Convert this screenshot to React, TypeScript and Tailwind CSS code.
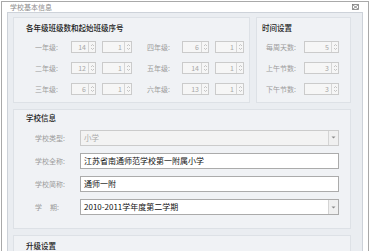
import React from 'react';

const font = { fontFamily: '"Noto Sans CJK SC", "Noto Sans", sans-serif' };

const Spinner: React.FC<{ value: number; w: string }> = ({ value, w }) => (
  <div className={`flex h-[12px] ${w} border border-[#cbcbcb] bg-[#f6f6f6]`}>
    <div className="flex-1 pr-[2px] text-right text-[7px] leading-[10px] text-[#a8a8a8]">{value}</div>
    <div className="flex w-[7px] flex-col items-center justify-center border-l border-[#d6d6d6]">
      <svg width="5" height="8" viewBox="0 0 5 8">
        <path d="M1 3 L2.5 1.5 L4 3" fill="none" stroke="#b8b8b8" strokeWidth="0.8" />
        <path d="M1 5 L2.5 6.5 L4 5" fill="none" stroke="#b8b8b8" strokeWidth="0.8" />
      </svg>
    </div>
  </div>
);

const DropBtn: React.FC = () => (
  <div className="flex w-[10px] items-center justify-center border-l border-[#d4d4d4] bg-[#f0f0f0]">
    <svg width="5" height="3" viewBox="0 0 5 3">
      <path d="M0.5 0.5 L4.5 0.5 L2.5 2.5 Z" fill="#8a8a8a" />
    </svg>
  </div>
);

const grades = [
  ['一年级:', 14, 1, '四年级:', 6, 1],
  ['二年级:', 12, 1, '五年级:', 14, 1],
  ['三年级:', 6, 1, '六年级:', 13, 1],
] as const;

const times = [
  ['每周天数:', 5],
  ['上午节数:', 3],
  ['下午节数:', 3],
] as const;

const App: React.FC = () => {
  return (
    <div className="h-[251px] w-[373px] overflow-hidden bg-white" style={font}>
      <div className="ml-px mt-px flex h-[250px] w-[368px] flex-col border-l border-r border-t border-[#a9a9a9] bg-white">
        {/* title bar */}
        <div className="flex h-[15px] items-center justify-between pl-[8px] pr-[9px]">
          <span className="text-[7px] leading-[10px] text-[#8c8c8c]">学校基本信息</span>
          <svg width="7" height="6" viewBox="0 0 7 6">
            <rect x="0.5" y="0.5" width="6" height="5" fill="none" stroke="#7a7a7a" strokeWidth="0.8" />
            <path d="M1 1 L6 5 M6 1 L1 5" stroke="#7a7a7a" strokeWidth="0.8" />
          </svg>
        </div>

        {/* content panel */}
        <div className="ml-[5px] w-[356px] flex-1 border-l border-r border-t border-[#cdd2d9] bg-[#eaedf1] pl-[5px] pt-[4px]">
          <div className="flex gap-[6px]">
            {/* grades */}
            <div className="h-[86px] w-[237px] border border-[#dde1e6] bg-[#f0f2f5]">
              <div className="pl-[12px] pt-[5px] text-[7.5px] font-medium leading-[10px] text-[#222]">
                各年级班级数和起始班级序号
              </div>
              <div className="mt-[3px]">
                {grades.map(([l1, a1, b1, l2, a2, b2]) => (
                  <div key={l1} className="flex h-[21px] items-center">
                    <div className="w-[50px] pl-[21px] text-[7px] leading-[10px] text-[#9c9c9c]">{l1}</div>
                    <div className="ml-[7px]"><Spinner value={a1} w="w-[25px]" /></div>
                    <div className="ml-[6px]"><Spinner value={b1} w="w-[30px]" /></div>
                    <div className="ml-[15px] w-[34px] text-[7px] leading-[10px] text-[#9c9c9c]">{l2}</div>
                    <div className="ml-[1px]"><Spinner value={a2} w="w-[27px]" /></div>
                    <div className="ml-[6px]"><Spinner value={b2} w="w-[29px]" /></div>
                  </div>
                ))}
              </div>
            </div>

            {/* time */}
            <div className="h-[86px] w-[95px] border border-[#dde1e6] bg-[#f0f2f5]">
              <div className="pl-[5px] pt-[5px] text-[7.5px] font-medium leading-[10px] text-[#222]">时间设置</div>
              <div className="mt-[3px]">
                {times.map(([l, v]) => (
                  <div key={l} className="flex h-[21px] items-center">
                    <div className="w-[42px] pl-[9px] text-[7px] leading-[10px] text-[#9c9c9c]">{l}</div>
                    <div className="ml-[5px]"><Spinner value={v} w="w-[35px]" /></div>
                  </div>
                ))}
              </div>
            </div>
          </div>

          {/* school info */}
          <div className="mt-[6px] h-[120px] w-[338px] border border-[#dde1e6] bg-[#f0f2f5]">
            <div className="pl-[12px] pt-[3px] text-[7.5px] font-medium leading-[10px] text-[#222]">学校信息</div>
            <div className="mt-[3px]">
              <div className="flex h-[23px] items-center">
                <div className="w-[66px] pl-[21px] text-[7px] leading-[10px] text-[#9c9c9c]">学校类型:</div>
                <div className="flex h-[16px] w-[259px] border border-[#cbcbcb] bg-[#f3f3f3]">
                  <div className="flex-1 pl-[3px] text-[7.5px] leading-[14px] text-[#aaaaaa]">小学</div>
                  <DropBtn />
                </div>
              </div>
              <div className="flex h-[23px] items-center">
                <div className="w-[66px] pl-[21px] text-[7px] leading-[10px] text-[#9c9c9c]">学校全称:</div>
                <div className="h-[16px] w-[259px] border border-[#ababab] bg-white pl-[3px] text-[8px] leading-[14px] text-[#111]">
                  江苏省南通师范学校第一附属小学
                </div>
              </div>
              <div className="flex h-[23px] items-center">
                <div className="w-[66px] pl-[21px] text-[7px] leading-[10px] text-[#9c9c9c]">学校简称:</div>
                <div className="h-[16px] w-[259px] border border-[#ababab] bg-white pl-[3px] text-[8px] leading-[14px] text-[#111]">
                  通师一附
                </div>
              </div>
              <div className="flex h-[24px] items-center">
                <div className="w-[66px] pl-[21px] text-[7px] leading-[10px] text-[#9c9c9c]">
                  学<span className="inline-block w-[8px]" />期:
                </div>
                <div className="flex h-[16px] w-[259px] border border-[#ababab] bg-white">
                  <div className="flex-1 pl-[3px] text-[8px] leading-[14px] text-[#111]">2010-2011学年度第二学期</div>
                  <DropBtn />
                </div>
              </div>
            </div>
          </div>

          {/* upgrade */}
          <div className="mt-[6px] h-[40px] w-[338px] border border-[#dde1e6] bg-[#f0f2f5]">
            <div className="pl-[12px] pt-[5px] text-[7.5px] font-medium leading-[10px] text-[#222]">升级设置</div>
          </div>
        </div>
      </div>
    </div>
  );
};

export default App;
